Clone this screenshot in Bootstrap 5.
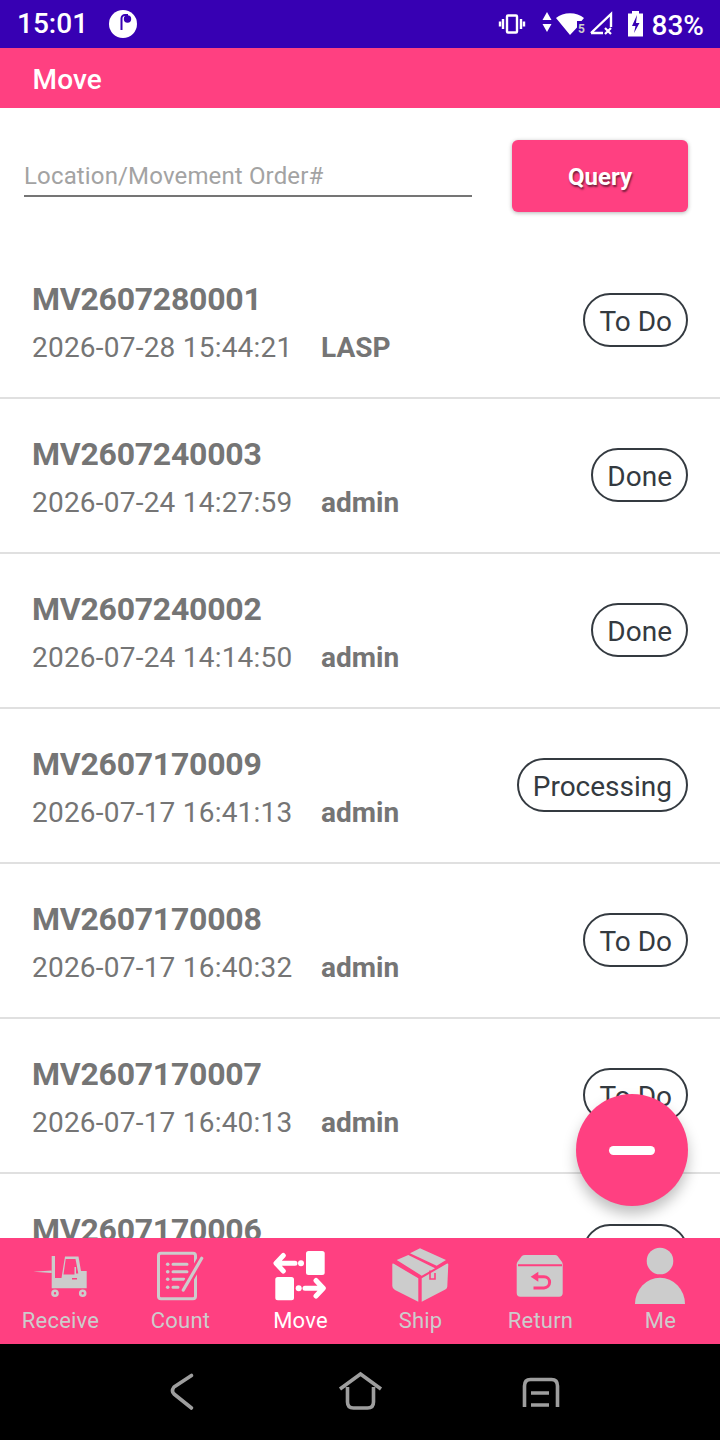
<!DOCTYPE html>
<html lang="en">
<head>
    <meta charset="UTF-8">
    <title>Move</title>
    <link rel="stylesheet" href="https://cdn.jsdelivr.net/npm/bootstrap@5.3.2/dist/css/bootstrap.min.css">
    <style>
        html, body { height: 1440px; overflow: hidden; }
        body { font-family: Roboto, "Liberation Sans", sans-serif; background: #fff; }
        .app-shell { height: 1440px; width: 720px; }
        .status-strip { height: 48px; background: #3700b3; color: #fff; padding-left: 17px; font-size: 28px; line-height: 48px; flex: none; }
        .status-strip .clock { width: 92px; font-weight: 500; }
        .status-icons { margin-left: auto; }
        .title-strip { height: 60px; background: #ff4081; color: #fff; padding-left: 32.5px; font-size: 28px; font-weight: 500; line-height: 63px; letter-spacing: .15px; flex: none; }
        .search-row { height: 136px; padding: 32px 32px 32px 24px; flex: none; }
        .search-input.form-control { width: 448px; height: 51px; margin-top: 6px; border: 0; border-bottom: 2px solid #757575; border-radius: 0; padding: 11px 0 0; font-size: 24px; letter-spacing: .15px; color: #757575; box-shadow: none; }
        .search-input::placeholder { color: #a3a3a3; }
        .query-btn.btn { width: 176px; height: 72px; padding-top: 8px; background: #ff4081; border: 0; border-radius: 6px; color: #fff; font-size: 24px; font-weight: 700; letter-spacing: 0; text-shadow: 1px 2px 2px rgba(0,0,0,.55); box-shadow: 0 1px 4px rgba(0,0,0,.3); }
        .order-list { min-height: 0; overflow: hidden; }
        .order-row.list-group-item { height: 155px; padding: 0 32px; border-color: #e0e0e0; border-width: 0 0 2px; color: #757575; flex: none; }
        .order-no { font-size: 32px; font-weight: 700; line-height: 38px; letter-spacing: -.25px; margin-top: 4px; }
        .order-meta { font-size: 28px; line-height: 34px; margin-top: 13px; letter-spacing: .22px; }
        .order-meta b { margin-left: 28.5px; font-weight: 700; letter-spacing: 0; }
        .state-pill { border: 2px solid #343a40; border-radius: 27px; height: 54px; padding: 0 14px; font-size: 28px; line-height: 54px; color: #343a40; margin-bottom: 2px; }
        .fab-round { position: absolute; left: 576px; top: 1094px; width: 112px; height: 112px; border-radius: 50%; background: #ff4081; box-shadow: 0 8px 14px rgba(0,0,0,.25); }
        .fab-round i { width: 46px; height: 9px; border-radius: 5px; background: #fff; display: block; }
        .tab-strip { height: 106px; background: #ff4081; flex: none; }
        .tab-cell { width: 120px; padding-top: 7px; color: #ccc; font-size: 22px; line-height: 26px; letter-spacing: .2px; text-indent: 1px; }
        .tab-cell.on { color: #fff; }
        .tab-cell svg { width: 60px; height: 60px; display: block; margin-bottom: 3px; fill: currentColor; }
        .nav-strip { height: 96px; background: #000; flex: none; }
    </style>
</head>
<body>

<div class="app-shell d-flex flex-column">

    <div class="status-strip d-flex align-items-center">
        <span class="clock">15:01</span>
        <svg width="28" height="28" viewBox="0 0 28 28"><circle cx="14" cy="14" r="14" fill="#fff"/><path d="M12.500 20V8.500a3.500 3.500 0 0 1 3.500-3.500h3" fill="none" stroke="#3700b3" stroke-width="2"/><circle cx="18.500" cy="9" r="3.700" fill="#3700b3"/></svg>
        <svg class="status-icons" width="222" height="48" viewBox="498 0 222 48">
            <g fill="none" stroke="#fff" stroke-width="2.400">
                <rect x="507" y="15.500" width="10" height="17" rx="1"/>
                <path d="M503 19v10M521 19v10M500 21.500v5M524 21.500v5"/>
                <path d="M591 33l20-19v13M591 33h12" stroke-width="2.400"/>
                <path d="M605 28l6 6M611 28l-6 6" stroke-width="2.200"/>
            </g>
            <g fill="#fff">
                <path d="M547 12l-4.500 8h9zM547 32l-4.500-8h9z"/>
                <path d="M556 18c7-6.500 21-6.500 28 0l-2.500 3h-4.500v6.500l-7 7.500z"/>
                <text x="578" y="33" font-size="12" font-weight="700" font-family="Roboto, sans-serif" fill="#ccc">5</text>
                <path d="M628 13.500h4v-2.500h7v2.500h4v23h-15zM637 15l-5 11h3.500l-1.500 7 5.500-10h-3.500z" fill-rule="evenodd"/>
                <text x="651.500" y="35" font-size="28" font-weight="500" font-family="Roboto, sans-serif">83%</text>
            </g>
        </svg>
    </div>

    <div class="title-strip">Move</div>

    <div class="search-row d-flex justify-content-between align-items-start">
        <input class="search-input form-control" type="text" placeholder="Location/Movement Order#">
        <button class="query-btn btn" type="button">Query</button>
    </div>

    <ul class="order-list list-group list-group-flush flex-grow-1 flex-nowrap">
        <li class="order-row list-group-item d-flex justify-content-between align-items-center">
            <div><div class="order-no">MV2607280001</div><div class="order-meta">2026-07-28 15:44:21<b>LASP</b></div></div>
            <span class="state-pill">To Do</span>
        </li>
        <li class="order-row list-group-item d-flex justify-content-between align-items-center">
            <div><div class="order-no">MV2607240003</div><div class="order-meta">2026-07-24 14:27:59<b>admin</b></div></div>
            <span class="state-pill">Done</span>
        </li>
        <li class="order-row list-group-item d-flex justify-content-between align-items-center">
            <div><div class="order-no">MV2607240002</div><div class="order-meta">2026-07-24 14:14:50<b>admin</b></div></div>
            <span class="state-pill">Done</span>
        </li>
        <li class="order-row list-group-item d-flex justify-content-between align-items-center">
            <div><div class="order-no">MV2607170009</div><div class="order-meta">2026-07-17 16:41:13<b>admin</b></div></div>
            <span class="state-pill">Processing</span>
        </li>
        <li class="order-row list-group-item d-flex justify-content-between align-items-center">
            <div><div class="order-no">MV2607170008</div><div class="order-meta">2026-07-17 16:40:32<b>admin</b></div></div>
            <span class="state-pill">To Do</span>
        </li>
        <li class="order-row list-group-item d-flex justify-content-between align-items-center">
            <div><div class="order-no">MV2607170007</div><div class="order-meta">2026-07-17 16:40:13<b>admin</b></div></div>
            <span class="state-pill">To Do</span>
        </li>
        <li class="order-row list-group-item d-flex justify-content-between align-items-center">
            <div><div class="order-no">MV2607170006</div><div class="order-meta">2026-07-17 16:39:50<b>admin</b></div></div>
            <span class="state-pill">To Do</span>
        </li>
    </ul>

    <div class="tab-strip d-flex">
        <div class="tab-cell d-flex flex-column align-items-center">
            <svg viewBox="0 0 60 60">
                <path d="M3.300 26.700l18.400-1.200v2.400z"/>
                <rect x="21.700" y="11" width="3.300" height="32.300"/>
                <path d="M25 33h6.500l3.500-21.500h13.500l2.500 14.500h5.700v17.300H25zM33.500 29.500h11V22h1.500v6.500h2.300L45.500 14h-9.800z" fill-rule="evenodd"/>
                <rect x="42" y="33" width="5" height="1.500" fill="#ff4081"/>
                <circle cx="25" cy="48.300" r="2.500" fill="none" stroke="#ccc" stroke-width="2.600"/>
                <circle cx="52.700" cy="48.300" r="2.500" fill="none" stroke="#ccc" stroke-width="2.600"/>
            </svg>
            Receive
        </div>
        <div class="tab-cell d-flex flex-column align-items-center">
            <svg viewBox="0 0 60 60">
                <rect x="8.500" y="8.200" width="37" height="45.500" rx="2.500" fill="none" stroke="#ccc" stroke-width="3"/>
                <circle cx="17.700" cy="19.300" r="1.800"/><circle cx="17.700" cy="26.700" r="1.800"/><circle cx="17.700" cy="34.300" r="1.800"/><circle cx="17.700" cy="42.300" r="1.800"/>
                <path d="M23 19.300h14M23 26.700h14M23 34.300h11M23 42.300h5" stroke="#ccc" stroke-width="3" stroke-linecap="round"/>
                <path d="M51.700 13.300L33.300 45" stroke="#ff4081" stroke-width="8"/>
                <path d="M51.700 13.300L33.300 45" stroke="#ccc" stroke-width="3.200" stroke-linecap="round"/>
            </svg>
            Count
        </div>
        <div class="tab-cell on d-flex flex-column align-items-center">
            <svg viewBox="0 0 60 60">
                <rect x="36" y="6" width="18.700" height="24" rx="2.500"/>
                <rect x="5.300" y="32" width="18.700" height="23.300" rx="2.500"/>
                <circle cx="31" cy="18.300" r="3"/><circle cx="28.700" cy="43.300" r="3"/>
                <path d="M25 18.300H7M13.300 10.500L6 18.300l7.300 7.700M35 43.300h18M46 35.500l7.300 7.800-7.300 7.700" fill="none" stroke="#fff" stroke-width="5" stroke-linecap="round" stroke-linejoin="round"/>
            </svg>
            Move
        </div>
        <div class="tab-cell d-flex flex-column align-items-center">
            <svg viewBox="0 0 60 60">
                <path d="M2.300 19.500q0-1.500 1.500-.7l24.500 14.500v23.400L5 45q-2.700-1.300-2.700-4zM31.700 33.300l25-14.500q1.600-.8 1.600.8l-1 22q0 2-2 3L31.700 56.700z"/>
                <path d="M6.700 15l11.600-5 26.700 13.300-13.300 7.400zM20 8.300l10-5 26 11.700-9.300 5.700z"/>
                <path d="M40 25.500v8.500h5v-6" fill="none" stroke="#ff4081" stroke-width="1.600"/>
            </svg>
            Ship
        </div>
        <div class="tab-cell d-flex flex-column align-items-center">
            <svg viewBox="0 0 60 60">
                <path d="M15 10h30q1.500 0 2.500 1l4.500 6q.7 1 .7 2.500V48q0 3.700-3.700 3.700H10.400Q6.700 51.700 6.700 48V19.500q0-1.500.7-2.500l4.500-6q1-1 3.100-1z"/>
                <path d="M8 20.200h44" stroke="#ff4081" stroke-width="2"/>
                <path d="M20.700 31.700l7.600-5v10z" fill="#ff4081"/>
                <path d="M25 31.700h9a5.600 5.600 0 0 1 0 11.200H23.500" fill="none" stroke="#ff4081" stroke-width="3"/>
            </svg>
            Return
        </div>
        <div class="tab-cell d-flex flex-column align-items-center">
            <svg viewBox="0 0 60 60">
                <circle cx="30" cy="16" r="13.300"/>
                <path d="M5 59a25 26.300 0 0 1 50 0z"/>
            </svg>
            Me
        </div>
    </div>

    <div class="nav-strip">
        <svg width="720" height="96" viewBox="0 1344 720 96" fill="none" stroke="#9e9e9e" stroke-width="3.600">
            <path d="M191.500 1375.500l-17.500 11.500q-3 4 0 7l17.500 14" stroke-linecap="round" stroke-linejoin="round"/>
            <path d="M340 1389l20.500-15 20.500 15M347.500 1387v15q0 6 6 6h14q6 0 6-6v-15"/>
            <path d="M524.500 1407v-21q0-6.500 6-6.500h21q6 0 6 6.500v21M531 1393h18M531 1405h18"/>
        </svg>
    </div>
</div>

<div class="fab-round d-flex align-items-center justify-content-center"><i></i></div>

<script src="https://cdn.jsdelivr.net/npm/bootstrap@5.3.2/dist/js/bootstrap.bundle.min.js"></script>
</body>
</html>
